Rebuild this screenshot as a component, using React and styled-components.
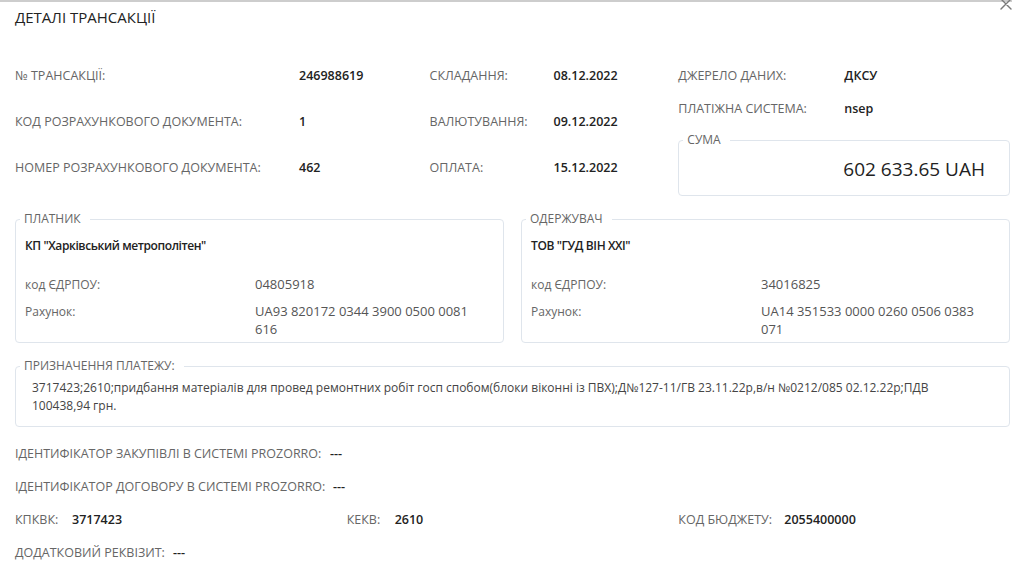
import styled, { createGlobalStyle } from "styled-components";

const GlobalStyle = createGlobalStyle`
    body {
        margin: 0;
        background: #ffffff;
        font-family: "Open Sans", "Noto Sans", sans-serif;
        color: #222;
    }
`

const Page = styled.div`
    position: relative;
    width: 1024px;
    height: 563px;
    overflow: hidden;
    background: #fff;
`

const Header = styled.h1`
    margin: 0 12px 0 0;
    padding-left: 15px;
    height: 30px;
    display: flex;
    align-items: center;
    border-top: 2px solid #cdcdcd;
    font-size: 15px;
    font-weight: 400;
    color: #222;
`

const CloseButton = styled.button`
    position: absolute;
    top: -3px;
    right: 11px;
    padding: 0;
    border: 0;
    background: transparent;
    color: #7a7a7a;
    line-height: 0;
`

const Body = styled.div`
    padding: 0 14px 0 15px;
`

const TopGrid = styled.div`
    margin-top: 21px;
    display: grid;
    grid-template-columns: 5fr 3fr 4fr;
    align-items: start;
`

const Column = styled.div`
    display: flex;
    flex-direction: column;
    padding-top: ${({ offset }) => offset || 0}px;
`

const InfoRow = styled.div`
    display: grid;
    grid-template-columns: ${({ labelWidth }) => labelWidth}px auto;
    align-items: center;
    height: ${({ rowHeight }) => rowHeight}px;
`

const Label = styled.span`
    color: #666;
    font-size: 12.5px;
    line-height: 18px;
    white-space: nowrap;
`

const SmallLabel = styled(Label)`
    font-size: 12px;
`

const Value = styled.span`
    color: #222;
    font-size: 12.5px;
    font-weight: 600;
    line-height: 18px;
`

const Box = styled.fieldset`
    margin: ${({ mt }) => mt || 0}px 0 0;
    padding: ${({ pad }) => pad};
    border: 1px solid #dfe5ec;
    border-radius: 4px;
    min-width: 0;
`

const Legend = styled.legend`
    margin-left: -5px;
    padding: 0 9px 1px 4px;
    font-size: 12px;
    line-height: 16px;
    color: #666;
`

const Amount = styled.div`
    text-align: right;
    font-size: 19px;
    line-height: 26px;
    color: #222;
`

const PartiesGrid = styled.div`
    margin-top: 15px;
    display: grid;
    grid-template-columns: 1fr 1fr;
    gap: 17px;
`

const PartyName = styled.div`
    font-size: 12px;
    font-weight: 600;
    line-height: 18px;
    letter-spacing: -0.4px;
    color: #222;
`

const PartyDetails = styled.div`
    margin-top: 20px;
    display: grid;
    grid-template-columns: 230px 225px;
    align-items: baseline;
    row-gap: 8px;
`

const PartyValue = styled.span`
    font-size: 13px;
    line-height: 18px;
    color: #555;
`

const PurposeText = styled.div`
    max-width: 905px;
    padding-left: 7px;
    font-size: 12px;
    line-height: 18px;
    color: #444;
`

const Rows = styled.div`
    margin-top: 10px;
`

const Line = styled.div`
    display: grid;
    grid-template-columns: ${({ labelWidth }) => labelWidth}px auto;
    align-items: center;
    height: 33px;
`

const ThreeCols = styled.div`
    display: grid;
    grid-template-columns: 1fr 1fr 1fr;
    height: 33px;
    align-items: center;
`

function CloseIcon() {
    return (
        <svg width="14" height="14" viewBox="0 0 14 14" fill="none" stroke="currentColor" strokeWidth="1.4" strokeLinecap="round">
            <path d="M2 2 L12 12 M12 2 L2 12" />
        </svg>
    )
}

const leftRows = [
    ["№ ТРАНСАКЦІЇ:", "246988619"],
    ["КОД РОЗРАХУНКОВОГО ДОКУМЕНТА:", "1"],
    ["НОМЕР РОЗРАХУНКОВОГО ДОКУМЕНТА:", "462"],
]

const dateRows = [
    ["СКЛАДАННЯ:", "08.12.2022"],
    ["ВАЛЮТУВАННЯ:", "09.12.2022"],
    ["ОПЛАТА:", "15.12.2022"],
]

const sourceRows = [
    ["ДЖЕРЕЛО ДАНИХ:", "ДКСУ"],
    ["ПЛАТІЖНА СИСТЕМА:", "nsep"],
]

const parties = [
    {
        title: "ПЛАТНИК",
        name: "КП \"Харківський метрополітен\"",
        code: "04805918",
        account: "UA93 820172 0344 3900 0500 0081 616",
    },
    {
        title: "ОДЕРЖУВАЧ",
        name: "ТОВ \"ГУД ВІН XXI\"",
        code: "34016825",
        account: "UA14 351533 0000 0260 0506 0383 071",
    },
]

const codes = [
    ["КПКВК:", "3717423", 57],
    ["КЕКВ:", "2610", 48],
    ["КОД БЮДЖЕТУ:", "2055400000", 106],
]

function App() {
    return (
        <Page>
            <GlobalStyle />
            <Header>ДЕТАЛІ ТРАНСАКЦІЇ</Header>
            <CloseButton aria-label="Закрити">
                <CloseIcon />
            </CloseButton>

            <Body>
                <TopGrid>
                    <Column>
                        {leftRows.map(([label, value]) => (
                            <InfoRow key={label} labelWidth={284} rowHeight={46}>
                                <Label>{label}</Label>
                                <Value>{value}</Value>
                            </InfoRow>
                        ))}
                    </Column>
                    <Column>
                        {dateRows.map(([label, value]) => (
                            <InfoRow key={label} labelWidth={124} rowHeight={46}>
                                <Label>{label}</Label>
                                <Value>{value}</Value>
                            </InfoRow>
                        ))}
                    </Column>
                    <Column offset={6}>
                        {sourceRows.map(([label, value]) => (
                            <InfoRow key={label} labelWidth={166} rowHeight={33}>
                                <Label>{label}</Label>
                                <Value>{value}</Value>
                            </InfoRow>
                        ))}
                        <Box mt={7} pad="7px 24px 13px 9px">
                            <Legend>СУМА</Legend>
                            <Amount>602 633.65 UAH</Amount>
                        </Box>
                    </Column>
                </TopGrid>

                <PartiesGrid>
                    {parties.map((party) => (
                        <Box key={party.title} pad="9px 9px 4px 9px">
                            <Legend>{party.title}</Legend>
                            <PartyName>{party.name}</PartyName>
                            <PartyDetails>
                                <SmallLabel>код ЄДРПОУ:</SmallLabel>
                                <PartyValue>{party.code}</PartyValue>
                                <SmallLabel>Рахунок:</SmallLabel>
                                <PartyValue>{party.account}</PartyValue>
                            </PartyDetails>
                        </Box>
                    ))}
                </PartiesGrid>

                <Box mt={15} pad="4px 9px 11px 9px">
                    <Legend>ПРИЗНАЧЕННЯ ПЛАТЕЖУ:</Legend>
                    <PurposeText>
                        3717423;2610;придбання матеріалів для провед ремонтних робіт госп спобом(блоки віконні із ПВХ);Д№127-11/ГВ 23.11.22р,в/н №0212/085 02.12.22р;ПДВ 100438,94 грн.
                    </PurposeText>
                </Box>

                <Rows>
                    <Line labelWidth={315}>
                        <Label>ІДЕНТИФІКАТОР ЗАКУПІВЛІ В СИСТЕМІ PROZORRO:</Label>
                        <Value>---</Value>
                    </Line>
                    <Line labelWidth={318}>
                        <Label>ІДЕНТИФІКАТОР ДОГОВОРУ В СИСТЕМІ PROZORRO:</Label>
                        <Value>---</Value>
                    </Line>
                    <ThreeCols>
                        {codes.map(([label, value, width]) => (
                            <Line key={label} labelWidth={width}>
                                <Label>{label}</Label>
                                <Value>{value}</Value>
                            </Line>
                        ))}
                    </ThreeCols>
                    <Line labelWidth={158}>
                        <Label>ДОДАТКОВИЙ РЕКВІЗИТ:</Label>
                        <Value>---</Value>
                    </Line>
                </Rows>
            </Body>
        </Page>
    );
}

export default App;
